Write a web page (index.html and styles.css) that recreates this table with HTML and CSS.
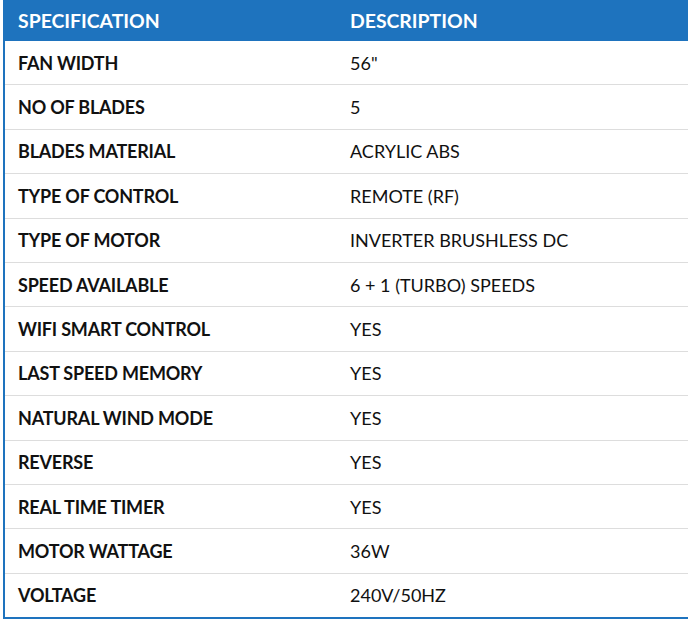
FILE: index.html
```html
<!DOCTYPE html>
<html>
<head>
<meta charset="utf-8">
<link rel="stylesheet" href="styles.css">
</head>
<body>
<div class="wrap">
  <div class="spec">
    <div class="row head"><div class="c1">SPECIFICATION</div><div class="c2">DESCRIPTION</div></div>
    <div class="row"><div class="c1">FAN WIDTH</div><div class="c2">56"</div></div>
    <div class="row"><div class="c1">NO OF BLADES</div><div class="c2">5</div></div>
    <div class="row"><div class="c1">BLADES MATERIAL</div><div class="c2">ACRYLIC ABS</div></div>
    <div class="row"><div class="c1">TYPE OF CONTROL</div><div class="c2">REMOTE (RF)</div></div>
    <div class="row"><div class="c1">TYPE OF MOTOR</div><div class="c2">INVERTER BRUSHLESS DC</div></div>
    <div class="row"><div class="c1">SPEED AVAILABLE</div><div class="c2">6 + 1 (TURBO) SPEEDS</div></div>
    <div class="row"><div class="c1">WIFI SMART CONTROL</div><div class="c2">YES</div></div>
    <div class="row"><div class="c1">LAST SPEED MEMORY</div><div class="c2">YES</div></div>
    <div class="row"><div class="c1">NATURAL WIND MODE</div><div class="c2">YES</div></div>
    <div class="row"><div class="c1">REVERSE</div><div class="c2">YES</div></div>
    <div class="row"><div class="c1">REAL TIME TIMER</div><div class="c2">YES</div></div>
    <div class="row"><div class="c1">MOTOR WATTAGE</div><div class="c2">36W</div></div>
    <div class="row last"><div class="c1">VOLTAGE</div><div class="c2">240V/50HZ</div></div>
  </div>
</div>
</body>
</html>
```
FILE: styles.css
```css
html, body {
  margin: 0;
  padding: 0;
  background: #fff;
  overflow: hidden;
}
.wrap {
  padding-left: 3px;
  width: 720px;
}
.spec {
  border-left: 2px solid #1e73be;
  border-bottom: 2px solid #1e73be;
  font-family: Lato, "Open Sans", sans-serif;
  color: #111;
  font-size: 18px;
}
.row {
  display: flex;
  align-items: center;
  height: 44.4px;
  box-sizing: border-box;
  border-bottom: 1px solid #dddddd;
}
.row.last {
  border-bottom: none;
  height: 43.4px;
}
.row.head {
  background: #1e73be;
  color: #fff;
  font-size: 19.4px;
  height: 41px;
  border-bottom: none;
}
.row.head .c2 {
  font-weight: 700;
}
.c1 {
  width: 332px;
  padding-left: 13px;
  box-sizing: border-box;
  font-weight: 700;
  letter-spacing: -0.2px;
}
.row.head .c1 {
  letter-spacing: 0;
}
.c2 {
  padding-left: 13px;
}
```
